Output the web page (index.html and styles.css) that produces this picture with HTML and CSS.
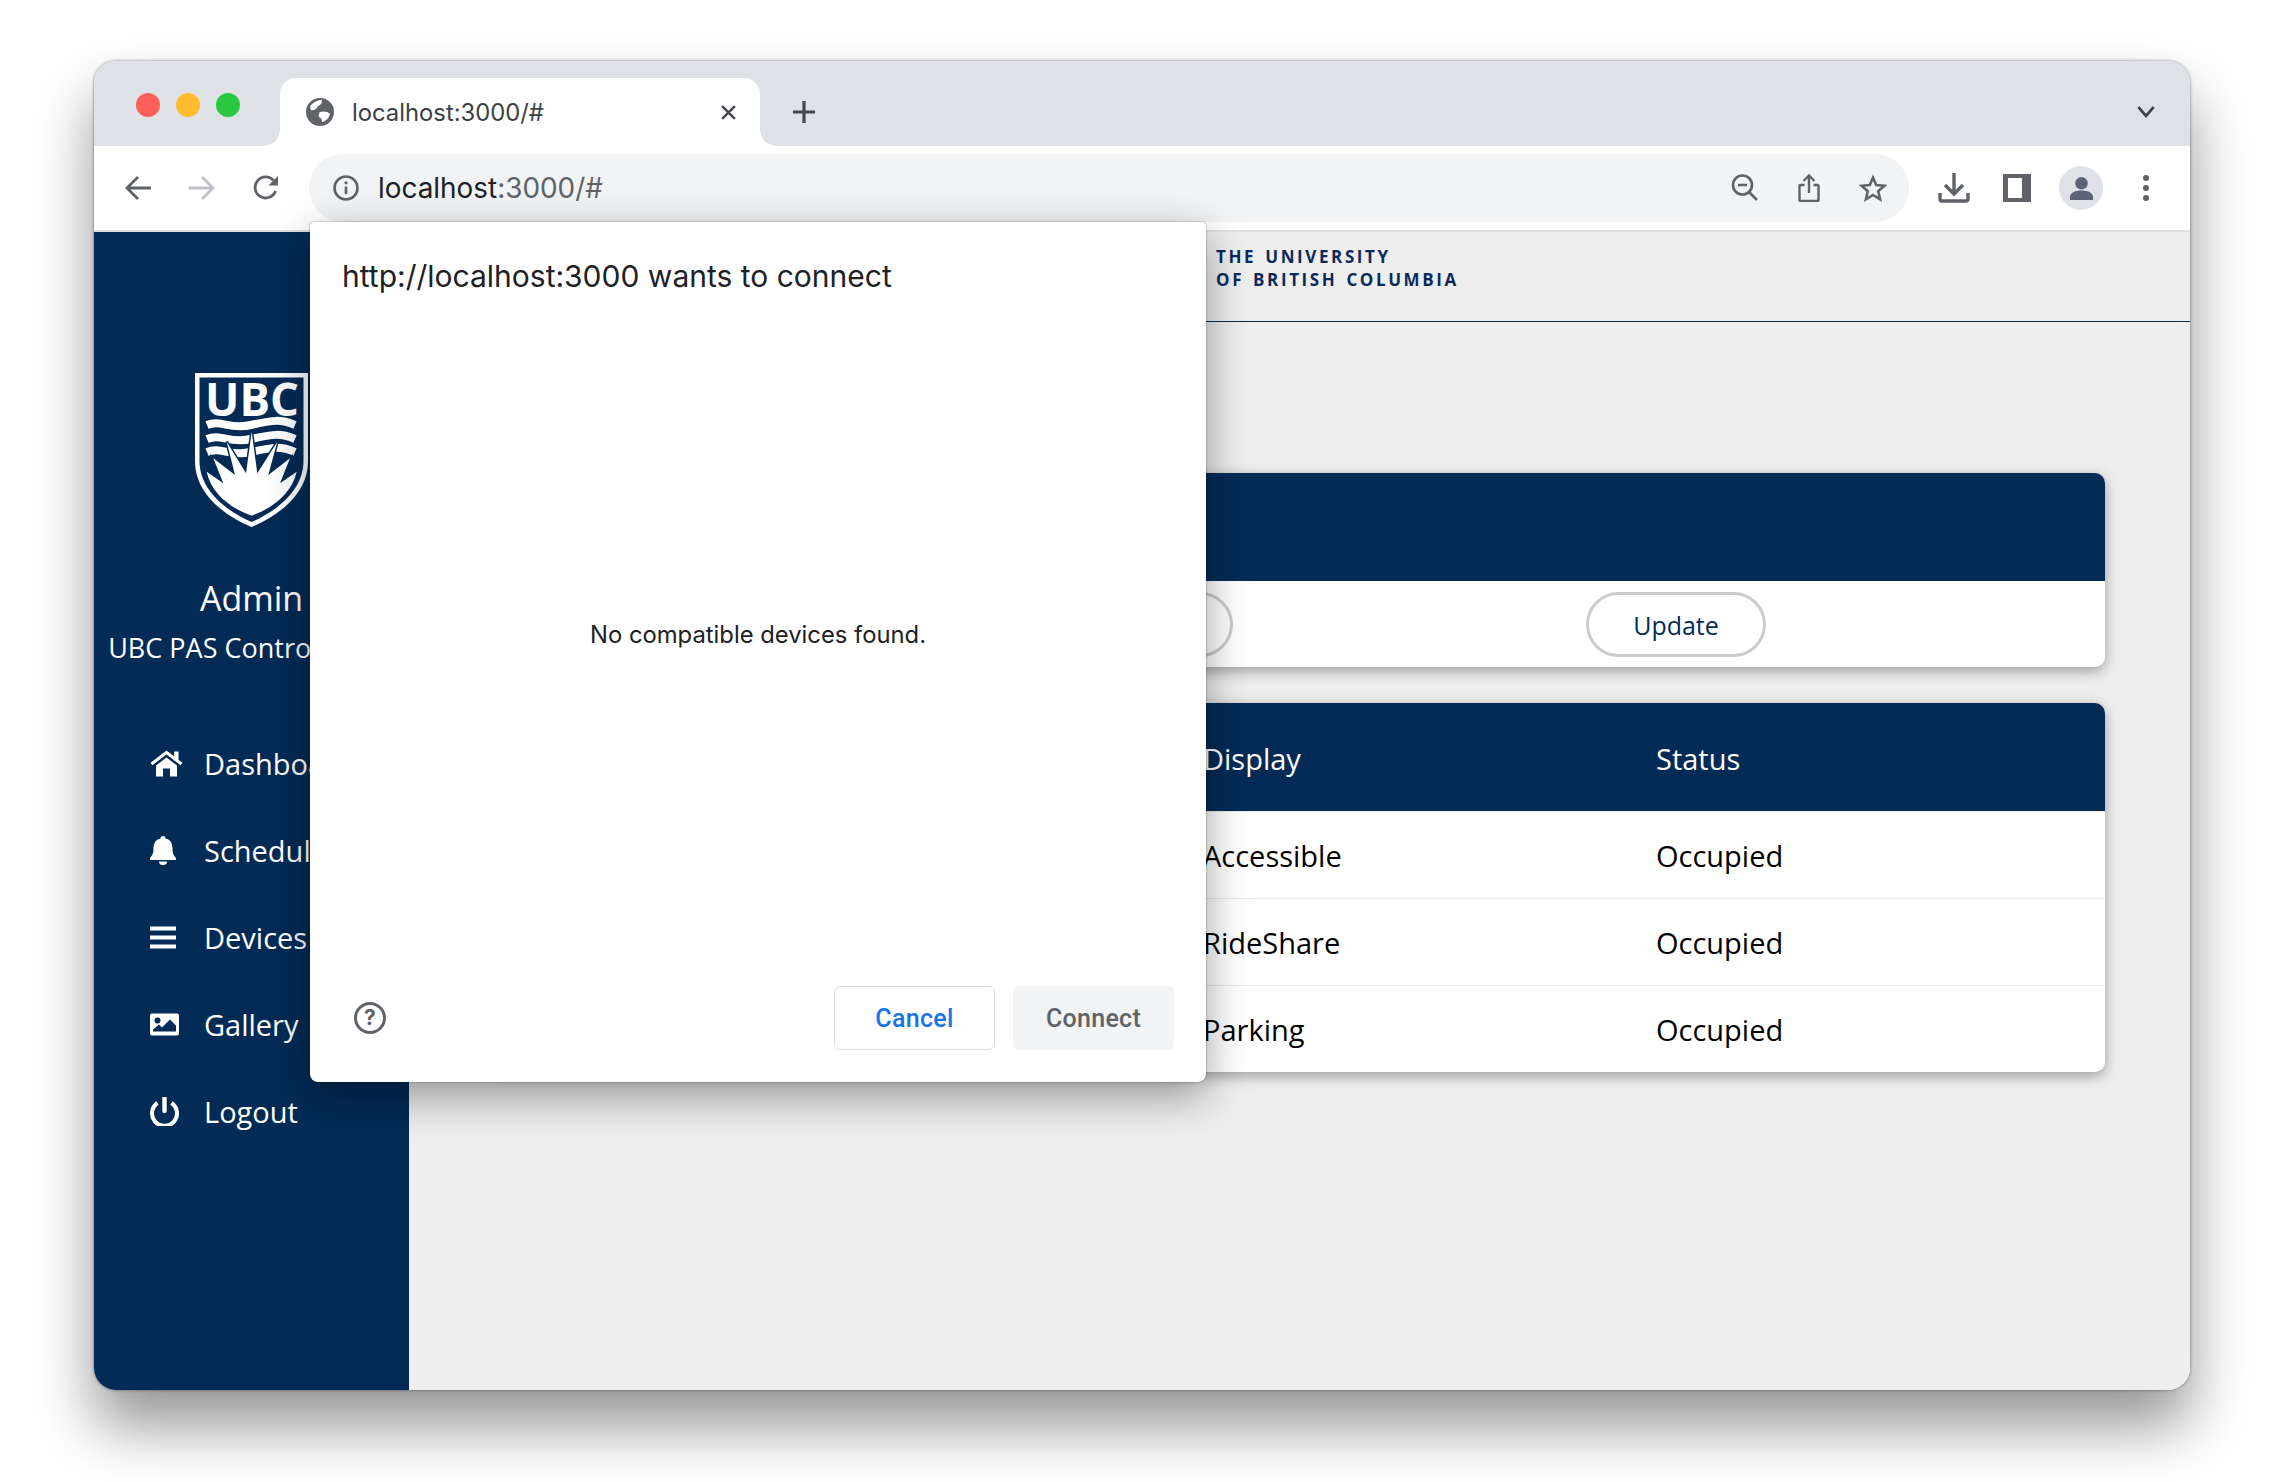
FILE: index.html
```html
<!DOCTYPE html>
<html lang="en">

<head>
    <meta charset="UTF-8">
    <title>localhost:3000/#</title>
    <link rel="stylesheet" href="styles.css">
</head>

<body>
    <div class="window">
        <div class="tabstrip">
            <div class="lights">
                <span class="light red"></span>
                <span class="light yellow"></span>
                <span class="light green"></span>
            </div>
            <div class="tab">
                <svg class="globe" viewBox="0 0 28 28">
                    <circle cx="14" cy="14" r="14" fill="#5f6368" />
                    <path d="M5 7c3-3 6-5 11-5 0 3-1 5-4 6-1 2-3 5-7 4-1-2-1-3 0-5zM14 14c3-1 8-1 10 2-1 4-4 7-8 8 0-3-1-4-3-5-1-2 0-4 1-5z" fill="#fff" />
                </svg>
                <span class="tab-title">localhost:3000/#</span>
                <svg class="tab-close" viewBox="0 0 16 16">
                    <path d="M2 2l12 12M14 2L2 14" stroke="#45484c" stroke-width="2.4" fill="none" />
                </svg>
            </div>
            <svg class="new-tab" viewBox="0 0 24 24">
                <path d="M12 1v22M1 12h22" stroke="#45484c" stroke-width="3.2" fill="none" />
            </svg>
            <svg class="tab-list" viewBox="0 0 18 12">
                <path d="M2 2l7 8 7-8" stroke="#3c4043" stroke-width="2.6" fill="none" />
            </svg>
        </div>

        <div class="toolbar">
            <svg class="nav-icon" viewBox="0 0 28 26">
                <path d="M27 13H3M14 2L3 13l11 11" stroke="#5f6368" stroke-width="2.8" fill="none" />
            </svg>
            <svg class="nav-icon" viewBox="0 0 28 26">
                <path d="M1 13h24M14 2l11 11-11 11" stroke="#bdc1c6" stroke-width="2.8" fill="none" />
            </svg>
            <svg class="nav-icon" viewBox="0 0 28 26">
                <path d="M23.5 16a10.5 10.5 0 1 1-2-10.500" stroke="#5f6368" stroke-width="2.8" fill="none" />
                <path d="M26 1v9.500h-9.500z" fill="#5f6368" />
            </svg>
            <div class="omnibox">
                <svg class="info" viewBox="0 0 26 26">
                    <circle cx="13" cy="13" r="11.500" stroke="#5f6368" stroke-width="2.600" fill="none" />
                    <path d="M13 11.500V19" stroke="#5f6368" stroke-width="2.600" />
                    <circle cx="13" cy="7.800" r="1.600" fill="#5f6368" />
                </svg>
                <span class="url">localhost<span class="url-rest">:3000/#</span></span>
                <div class="omni-icons">
                    <svg class="omni-icon" viewBox="0 0 28 28">
                        <circle cx="11.500" cy="11" r="9.500" stroke="#5f6368" stroke-width="2.600" fill="none" />
                        <path d="M7 11h9M18 18l8 8" stroke="#5f6368" stroke-width="2.600" fill="none" />
                    </svg>
                    <svg class="omni-icon" viewBox="0 0 28 28">
                        <path d="M9.500 11H5.500a1 1 0 0 0-1 1v14a1 1 0 0 0 1 1h17a1 1 0 0 0 1-1V12a1 1 0 0 0-1-1h-4M14 19V1.500M8.500 7L14 1.500 19.500 7" stroke="#5f6368" stroke-width="2.400" fill="none" />
                    </svg>
                    <svg class="omni-icon" viewBox="0 0 28 28">
                        <path d="M14 3.500l3.200 7.600 8.300.700-6.300 5.400 1.900 8.100L14 21l-7.100 4.300 1.900-8.100-6.300-5.400 8.300-.700z" stroke="#5f6368" stroke-width="2.600" fill="none" />
                    </svg>
                </div>
            </div>
            <svg class="tool-icon" viewBox="0 0 32 30">
                <path d="M16 0v20M7 12l9 9 9-9" stroke="#5f6368" stroke-width="3.400" fill="none" />
                <path d="M2 20v6a2 2 0 0 0 2 2h24a2 2 0 0 0 2-2v-6" stroke="#5f6368" stroke-width="3.400" fill="none" />
            </svg>
            <svg class="tool-icon" viewBox="0 0 32 30">
                <path d="M2 1h28v28H2zM7 5v20h14V5z" fill="#5f6368" fill-rule="evenodd" />
            </svg>
            <div class="avatar">
                <svg viewBox="0 0 26 26">
                    <circle cx="13" cy="7.500" r="6.500" fill="#5a6378" />
                    <path d="M1 25v-3c0-5 6-7 12-7s12 2 12 7v3z" fill="#5a6378" />
                </svg>
            </div>
            <div class="kebab">
                <span></span><span></span><span></span>
            </div>
        </div>

        <div class="page">
            <aside class="sidebar">
                <svg class="crest" viewBox="0 0 113 154">
                    <path d="M0 0H113V88C113 120 85 142 56.500 154 28 142 0 120 0 88Z" fill="#fff" />
                    <path d="M4.500 4.500H108.500V88C108.500 117 82 138 56.500 149 31 138 4.500 117 4.500 88Z" fill="#032b56" />
                    <text x="10" y="43" class="crest-text" textLength="94" lengthAdjust="spacingAndGlyphs">UBC</text>
                    <path d="M12 52c14-6 22 5 44 0s30-6 44 0M12 66c14-6 22 5 44 0s30-6 44 0M12 79c14-6 22 5 44 0s30-6 44 0" stroke="#fff" stroke-width="8" fill="none" />
                    <path d="M11.700 98.700L28.300 110.300 18.300 85.300 40 102 31.700 68.700 51 100.300 56.700 58.700 62.300 100.300 82.300 68.700 73.300 102 95 85.300 85 110.300 101.700 98.700C97 120 78 135 56.700 142.700 35 135 16 120 11.700 98.700Z" fill="#fff" stroke="#032b56" stroke-width="3" paint-order="stroke" />
                </svg>
                <div class="user-name">Admin</div>
                <div class="user-role">UBC PAS Control Panel</div>
                <nav class="side-nav">
                    <a class="side-link">
                        <svg class="side-icon" viewBox="0 0 33 26">
                            <path d="M1.500 13.500L16.500 2l15 11.500" stroke="#fff" stroke-width="3" fill="none" />
                            <path d="M24 1h4.500v9H24zM6 15L16.500 7 27 15v11h-7v-8h-7v8H6z" fill="#fff" />
                        </svg>
                        Dashboard
                    </a>
                    <a class="side-link">
                        <svg class="side-icon" viewBox="0 0 33 29">
                            <path d="M13 0a2.500 2.500 0 0 1 2.500 2.500c5 1 7 5 7 10 0 5 1 6.500 3.500 9.500v2H0v-2c2.500-3 3.500-4.500 3.500-9.500 0-5 2-9 7-10A2.500 2.500 0 0 1 13 0zM9 25.500h8a4 3.500 0 0 1-8 0z" fill="#fff" />
                        </svg>
                        Schedule
                    </a>
                    <a class="side-link">
                        <svg class="side-icon" viewBox="0 0 33 22">
                            <path d="M0 0h26v4H0zM0 9h26v4H0zM0 18h26v4H0z" fill="#fff" />
                        </svg>
                        Devices
                    </a>
                    <a class="side-link">
                        <svg class="side-icon" viewBox="0 0 33 22">
                            <path d="M2 0h25a2 2 0 0 1 2 2v18a2 2 0 0 1-2 2H2a2 2 0 0 1-2-2V2a2 2 0 0 1 2-2zM3 18h23v-6l-6-6-8 8-3-3-6 5zM7.500 4a3 3 0 1 0 0 6 3 3 0 0 0 0-6z" fill="#fff" fill-rule="evenodd" />
                        </svg>
                        Gallery
                    </a>
                    <a class="side-link">
                        <svg class="side-icon" viewBox="0 0 33 29">
                            <path d="M7.500 6a12.500 12.500 0 1 0 14 0" stroke="#fff" stroke-width="4" fill="none" />
                            <path d="M14.500 1v13" stroke="#fff" stroke-width="4.400" stroke-linecap="round" fill="none" />
                        </svg>
                        Logout
                    </a>
                </nav>
            </aside>

            <main class="content">
                <header class="topbar">
                    <div class="wordmark">THE UNIVERSITY<br>OF BRITISH COLUMBIA</div>
                </header>
                <div class="cards">
                    <section class="card">
                        <div class="card-head"></div>
                        <div class="card-actions">
                            <button class="pill">Reset</button>
                            <button class="pill">Update</button>
                        </div>
                    </section>
                    <section class="card">
                        <div class="row row-head">
                            <div>Display</div>
                            <div>Status</div>
                        </div>
                        <div class="row">
                            <div>Accessible</div>
                            <div>Occupied</div>
                        </div>
                        <div class="row">
                            <div>RideShare</div>
                            <div>Occupied</div>
                        </div>
                        <div class="row">
                            <div>Parking</div>
                            <div>Occupied</div>
                        </div>
                    </section>
                </div>
            </main>
        </div>

        <div class="chooser">
            <div class="chooser-title">http://localhost:3000 wants to connect</div>
            <div class="chooser-body">No compatible devices found.</div>
            <div class="chooser-foot">
                <span class="help">?</span>
                <button class="btn btn-cancel">Cancel</button>
                <button class="btn btn-connect">Connect</button>
            </div>
        </div>
    </div>
</body>

</html>
```

FILE: styles.css
```css
* {
    box-sizing: border-box;
}

body {
    margin: 0;
    padding: 61px 96px 0 94px;
    height: 1482px;
    overflow: hidden;
    background-color: #fff;
    font-family: "Open Sans", sans-serif;
}

.window {
    position: relative;
    height: 1329px;
    border-radius: 22px;
    box-shadow: 0 36px 60px rgba(0, 0, 0, 0.42), 0 0 3px rgba(0, 0, 0, 0.5);
}

/* tab strip */
.tabstrip {
    display: flex;
    align-items: flex-end;
    height: 85px;
    background-color: #dee1e6;
    border-radius: 22px 22px 0 0;
}

.lights {
    display: flex;
    gap: 16px;
    align-self: flex-start;
    margin: 32px 0 0 42px;
    width: 144px;
}

.light {
    width: 24px;
    height: 24px;
    border-radius: 50%;
}

.red {
    background-color: #fe5f58;
}

.yellow {
    background-color: #febc2e;
}

.green {
    background-color: #2ac840;
}

.tab {
    position: relative;
    display: flex;
    align-items: center;
    width: 480px;
    height: 68px;
    padding: 0 23px 0 26px;
    background-color: #fff;
    border-radius: 16px 16px 0 0;
}

.tab::before,
.tab::after {
    content: "";
    position: absolute;
    bottom: 0;
    width: 16px;
    height: 16px;
}

.tab::before {
    left: -16px;
    background: radial-gradient(circle at 0 0, #dee1e6 15.500px, #fff 16px);
}

.tab::after {
    right: -16px;
    background: radial-gradient(circle at 100% 0, #dee1e6 15.500px, #fff 16px);
}

.globe {
    width: 28px;
    height: 28px;
}

.tab-title {
    margin-left: 18px;
    flex: 1;
    font-family: Inter, sans-serif;
    font-size: 23.800px;
    color: #3c4043;
}

.tab-close {
    width: 17px;
    height: 17px;
}

.new-tab {
    width: 24px;
    height: 24px;
    margin: 0 0 22px 32px;
}

.tab-list {
    width: 20px;
    height: 13px;
    margin: 0 34px 28px auto;
}

/* toolbar */
.toolbar {
    display: flex;
    align-items: center;
    height: 86px;
    padding-left: 30px;
    background-color: #fff;
    border-bottom: 2px solid #e0e0e0;
}

.nav-icon {
    width: 28px;
    height: 26px;
    margin-right: 36px;
}

.omnibox {
    display: flex;
    align-items: center;
    width: 1600px;
    height: 68px;
    margin-left: -7px;
    padding: 0 22px 0 24px;
    background-color: #f1f3f4;
    border-radius: 34px;
}

.info {
    width: 26px;
    height: 26px;
}

.url {
    margin-left: 19px;
    font-family: Inter, sans-serif;
    font-size: 27.900px;
    color: #202124;
}

.url-rest {
    color: #5f6368;
}

.omni-icons {
    display: flex;
    gap: 36px;
    margin-left: auto;
}

.omni-icon {
    width: 28px;
    height: 28px;
}

.tool-icon {
    width: 32px;
    height: 30px;
    margin-left: 29px;
}

.tool-icon + .tool-icon {
    margin-left: 31px;
}

.avatar {
    display: flex;
    align-items: center;
    justify-content: center;
    width: 44px;
    height: 44px;
    margin-left: 26px;
    background-color: #dee1e6;
    border-radius: 50%;
}

.avatar svg {
    width: 25px;
    height: 25px;
}

.kebab {
    display: flex;
    flex-direction: column;
    gap: 4px;
    margin-left: 40px;
}

.kebab span {
    width: 6px;
    height: 6px;
    background-color: #5f6368;
    border-radius: 50%;
}

/* page */
.page {
    display: flex;
    height: 1158px;
    border-radius: 0 0 22px 22px;
    overflow: hidden;
}

.sidebar {
    flex: 0 0 315px;
    padding-top: 141px;
    background-color: #032b56;
    color: #fff;
    text-align: center;
}

.crest {
    display: block;
    width: 113px;
    height: 154px;
    margin: 0 auto;
    overflow: visible;
}

.crest-text {
    font-family: "Open Sans", sans-serif;
    font-size: 46px;
    font-weight: 700;
    fill: #fff;
}

.user-name {
    margin-top: 48px;
    font-size: 34px;
    line-height: 46px;
}

.user-role {
    margin-top: 8px;
    font-size: 27px;
    line-height: 38px;
    white-space: nowrap;
}

.side-nav {
    display: flex;
    flex-direction: column;
    gap: 37px;
    margin-top: 71px;
    padding-left: 56px;
}

.side-link {
    display: flex;
    align-items: center;
    gap: 21px;
    height: 50px;
    font-size: 29px;
    white-space: nowrap;
}

.side-icon {
    flex: 0 0 33px;
    width: 33px;
    height: 29px;
}

.content {
    flex: 1;
    background-color: #eee;
}

.topbar {
    height: 90px;
    padding: 13px 0 0 807px;
    border-bottom: 1px solid #032b56;
}

.wordmark {
    font-family: "Open Sans", sans-serif;
    font-size: 17px;
    font-weight: 700;
    line-height: 23px;
    letter-spacing: 2.600px;
    word-spacing: 2px;
    color: #0b2a5b;
}

.cards {
    display: flex;
    flex-direction: column;
    gap: 36px;
    padding: 151px 85px 0;
}

.card {
    background-color: #fff;
    border-radius: 10px;
    overflow: hidden;
    box-shadow: 0 4px 14px rgba(0, 0, 0, 0.35);
}

.card-head {
    height: 108px;
    background-color: #032b56;
}

.card-actions {
    display: flex;
    justify-content: flex-end;
    gap: 353px;
    height: 86px;
    padding: 11px 339px 0 0;
}

.pill {
    width: 180px;
    height: 65px;
    background-color: #fff;
    border: 3px solid #ccc;
    border-radius: 33px;
    font-family: "Open Sans", sans-serif;
    font-size: 25px;
    color: #032b56;
}

.row {
    display: grid;
    grid-template-columns: 453px 1fr;
    align-items: center;
    height: 87px;
    padding-left: 709px;
    border-top: 1px solid #e8eee0;
    font-size: 29px;
    color: #000;
}

.row-head {
    height: 108px;
    padding-top: 2px;
    background-color: #032b56;
    border-top: 0;
    color: #fff;
}

/* device chooser */
.chooser {
    position: absolute;
    top: 161px;
    left: 216px;
    display: flex;
    flex-direction: column;
    width: 896px;
    height: 860px;
    padding: 36px 32px 32px;
    background-color: #fff;
    border-radius: 4px 4px 8px 8px;
    font-family: Inter, sans-serif;
    box-shadow: 0 14px 44px rgba(0, 0, 0, 0.38), 0 0 2px rgba(0, 0, 0, 0.45);
}

.chooser-title {
    font-size: 30px;
    line-height: 36px;
    color: #202124;
}

.chooser-body {
    flex: 1;
    display: flex;
    align-items: center;
    justify-content: center;
    padding-bottom: 12px;
    font-size: 23.800px;
    color: #202124;
}

.chooser-foot {
    display: flex;
    align-items: center;
    gap: 18px;
    height: 64px;
}

.help {
    width: 32px;
    height: 32px;
    margin: 0 auto 0 12px;
    border: 3px solid #5f6368;
    border-radius: 50%;
    font-size: 21px;
    font-weight: 700;
    line-height: 26px;
    text-align: center;
    color: #5f6368;
}

.btn {
    width: 161px;
    height: 64px;
    border-radius: 6px;
    font-family: Roboto, sans-serif;
    font-size: 25px;
    font-weight: 500;
    letter-spacing: 0.300px;
}

.btn-cancel {
    background-color: #fff;
    border: 1px solid #dadce0;
    color: #1a73e8;
}

.btn-connect {
    background-color: #f1f3f4;
    border: 0;
    color: #5f6368;
}
```
